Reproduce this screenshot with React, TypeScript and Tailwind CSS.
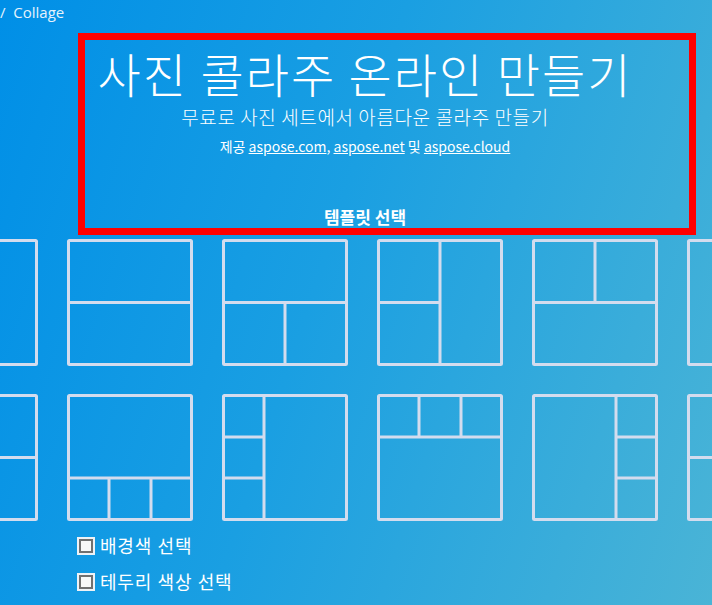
import React from "react"

// lines are [x1, y1, x2, y2] in a 126 x 127 box
type Line = [number, number, number, number]

const W = 126
const H = 127
const MX = W / 2
const MY = H / 2

const row1: Line[][] = [
  [[MX, 0, MX, H]],
  [[0, MY, W, MY]],
  [[0, MY, W, MY], [MX, MY, MX, H]],
  [[MX, 0, MX, H], [0, MY, MX, MY]],
  [[0, MY, W, MY], [MX, 0, MX, MY]],
  [[MX, 0, MX, H], [MX, MY, W, MY]],
]

const row2: Line[][] = [
  [[MX, 0, MX, H], [MX, MY, W, MY]],
  [[0, 84, W, 84], [42, 84, 42, H], [84, 84, 84, H]],
  [[42, 0, 42, H], [0, 43, 42, 43], [0, 84, 42, 84]],
  [[0, 43, W, 43], [42, 0, 42, 43], [84, 0, 84, 43]],
  [[84, 0, 84, H], [84, 43, W, 43], [84, 84, W, 84]],
  [[0, MY, W, MY], [MX, MY, MX, H]],
]

function Template({ lines }: { lines: Line[] }) {
  return (
    <svg width={W} height={H} viewBox={`0 0 ${W} ${H}`} className="shrink-0 cursor-pointer">
      <rect x={1.5} y={1.5} width={W - 3} height={H - 3} rx={1} fill="none" stroke="#d3dcee" strokeWidth={3} />
      {lines.map(([x1, y1, x2, y2], i) => (
        <line key={i} x1={x1} y1={y1} x2={x2} y2={y2} stroke="#d3dcee" strokeWidth={3} />
      ))}
    </svg>
  )
}

function TemplateRow({ items }: { items: Line[][] }) {
  return (
    <div className="flex gap-[29px] ml-[-88px]">
      {items.map((lines, i) => (
        <Template key={i} lines={lines} />
      ))}
    </div>
  )
}

function Check({ label }: { label: string }) {
  return (
    <label className="flex items-center gap-[5px] h-[20px] cursor-pointer">
      <span className="w-[18px] h-[18px] bg-[#eef2f6] p-[2px]">
        <span className="block w-full h-full border-2 border-[#707070] bg-[#f8f8f8]" />
      </span>
      <span className="text-[18px] leading-[20px] tracking-[0.8px] text-white">{label}</span>
    </label>
  )
}

export default function App() {
  return (
    <div className="relative w-[712px] h-[605px] overflow-hidden bg-[linear-gradient(108deg,#008fe7_0%,#1a9fe2_45%,#4ab4d6_100%)] font-['Open_Sans','Noto_Sans_CJK_KR',sans-serif] text-white">
      <div className="h-[24px] text-[15px] leading-[24px] text-[#e6f3fc] whitespace-pre">/  Collage</div>

      <div className="w-[730px] flex flex-col items-center font-['Noto_Sans_CJK_KR','Open_Sans',sans-serif]">
        <h1 className="mt-[27px] text-[47px] leading-[44px] font-light tracking-[2px]">사진 콜라주 온라인 만들기</h1>
        <p className="mt-[10px] text-[19px] leading-[24px] font-light tracking-[0.6px]">무료로 사진 세트에서 아름다운 콜라주 만들기</p>
        <p className="mt-[7px] text-[14px] leading-[20px]">
          제공 <a className="underline">aspose.com</a>, <a className="underline">aspose.net</a> 및{" "}
          <a className="underline">aspose.cloud</a>
        </p>
        <h2 className="mt-[49px] text-[17px] leading-[24px] font-bold">템플릿 선택</h2>
      </div>

      <div className="mt-[10px] flex flex-col gap-[28px]">
        <TemplateRow items={row1} />
        <TemplateRow items={row2} />
      </div>

      <div className="mt-[15px] ml-[77px] flex flex-col gap-[16px]">
        <Check label="배경색 선택" />
        <Check label="테두리 색상 선택" />
      </div>

      <div className="pointer-events-none absolute left-[78px] top-[33px] w-[618px] h-[202px] border-[7px] border-[#ff0000]" />
    </div>
  )
}
